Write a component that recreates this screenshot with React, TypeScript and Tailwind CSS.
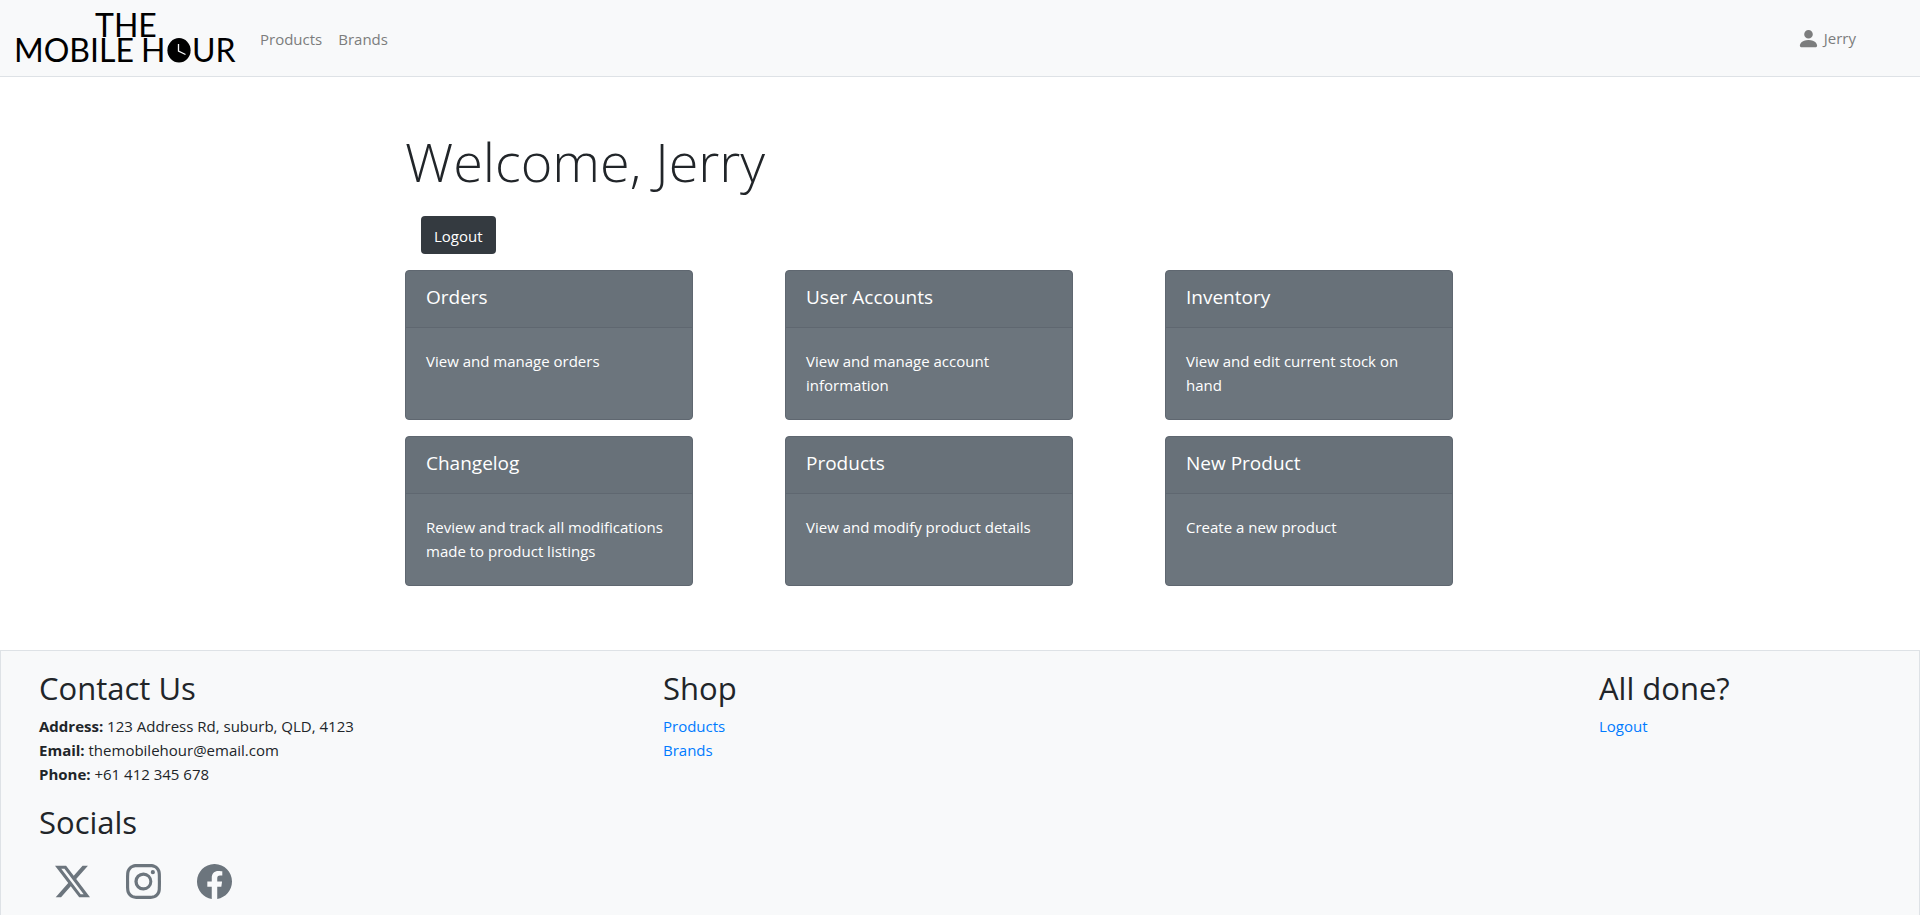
import React from "react";
import { BsFacebook, BsInstagram, BsPersonFill, BsTwitterX } from "react-icons/bs";

const cards = [
  { title: "Orders", text: "View and manage orders" },
  { title: "User Accounts", text: "View and manage account information" },
  { title: "Inventory", text: "View and edit current stock on hand" },
  { title: "Changelog", text: "Review and track all modifications made to product listings" },
  { title: "Products", text: "View and modify product details" },
  { title: "New Product", text: "Create a new product" },
];

const socials = [
  { name: "X", Icon: BsTwitterX },
  { name: "Instagram", Icon: BsInstagram },
  { name: "Facebook", Icon: BsFacebook },
];

function Logo() {
  return (
    <svg
      width="240"
      height="76"
      viewBox="0 0 240 76"
      role="img"
      aria-label="The Mobile Hour"
      className="font-['Lato',sans-serif] text-[32px]"
    >
      <text x="95" y="37">THE</text>
      <text x="14" y="62">MOBILE</text>
      <text x="141" y="62">H</text>
      <ellipse cx="179" cy="50.3" rx="11.6" ry="12.2" />
      <path d="M178.5 44v7l7 3.5" fill="none" stroke="#f8f9fa" strokeWidth="1.3" />
      <text x="192" y="62">UR</text>
    </svg>
  );
}

function Header() {
  return (
    <header className="flex h-[77px] items-center border-b border-[#dee2e6] bg-[#f8f9fa] text-[#7c7d7d]">
      <a href="#" className="mr-5">
        <Logo />
      </a>
      <nav className="flex gap-4 pt-[2px]">
        <a href="#products">Products</a>
        <a href="#brands">Brands</a>
      </nav>
      <a href="#account" className="mr-16 ml-auto flex items-center gap-1">
        <BsPersonFill size={23} />
        Jerry
      </a>
    </header>
  );
}

function Card({ title, text }: { title: string; text: string }) {
  return (
    <a
      href="#"
      className="flex min-h-[150px] w-[288px] flex-col rounded border border-[#5f6770] bg-[#6c757d] text-white"
    >
      <h5 className="h-[57px] border-b border-[#5f6770] bg-black/3 px-5 pt-3 text-[19px] leading-7 font-medium">
        {title}
      </h5>
      <p className="px-5 pt-[21px] pb-5">{text}</p>
    </a>
  );
}

function Footer() {
  return (
    <footer className="grid grow grid-cols-12 border border-b-0 border-[#dee2e6] bg-[#f8f9fa] px-[23px] pt-4">
      <section className="col-span-4 px-[15px]">
        <h2 className="mb-[5px] text-[31px] leading-[42px]">Contact Us</h2>
        <p><b>Address:</b> 123 Address Rd, suburb, QLD, 4123</p>
        <p><b>Email:</b> themobilehour@email.com</p>
        <p><b>Phone:</b> +61 412 345 678</p>
        <h2 className="mt-[15px] mb-[5px] text-[31px] leading-[42px]">Socials</h2>
        <div className="flex gap-9 p-4 text-[#6c757d]">
          {socials.map(({ name, Icon }) => (
            <a key={name} href="#" aria-label={name}>
              <Icon size={35} />
            </a>
          ))}
        </div>
      </section>
      <section className="col-span-6 px-[15px]">
        <h2 className="mb-[5px] text-[31px] leading-[42px]">Shop</h2>
        <a href="#products" className="block text-[#007bff]">Products</a>
        <a href="#brands" className="block text-[#007bff]">Brands</a>
      </section>
      <section className="col-span-2 px-[15px]">
        <h2 className="mb-[5px] text-[31px] leading-[42px]">All done?</h2>
        <a href="#logout" className="block text-[#007bff]">Logout</a>
      </section>
    </footer>
  );
}

export default function App() {
  return (
    <div className="flex min-h-screen flex-col bg-white font-['Open_Sans',sans-serif] text-[15px] leading-6 text-[#212529]">
      <Header />
      <main className="mx-auto w-full max-w-[1140px] px-[15px] pt-12 pb-16">
        <h1 className="mb-[18px] text-[54px] leading-[73px] font-light">Welcome, Jerry</h1>
        <button type="button" className="mb-4 ml-4 block h-[38px] rounded bg-[#343a40] px-[13px] pt-[2px] text-white">
          Logout
        </button>
        <div className="-mr-[30px] grid grid-cols-3 gap-y-4">
          {cards.map((card) => (
            <Card key={card.title} {...card} />
          ))}
        </div>
      </main>
      <Footer />
    </div>
  );
}
